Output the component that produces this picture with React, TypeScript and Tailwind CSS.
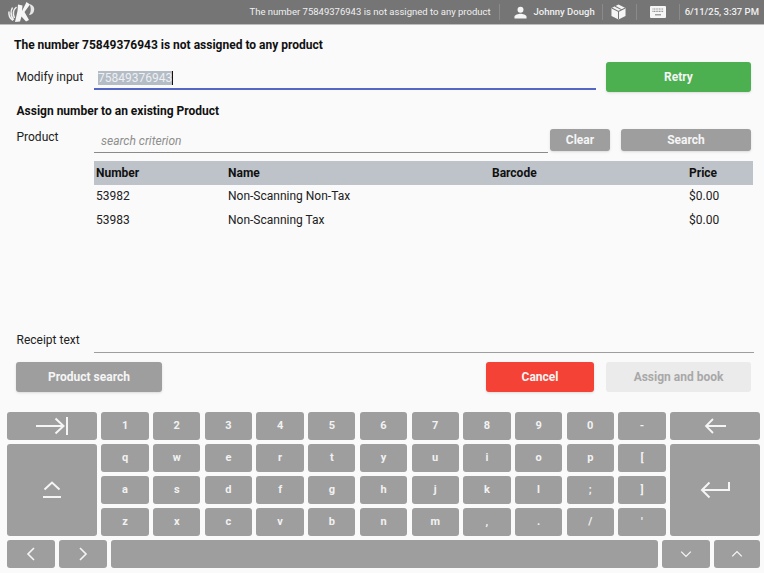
import React from "react";

const font = { fontFamily: "Roboto, 'Liberation Sans', sans-serif" };

function Key({ children, className = "" }: { children?: React.ReactNode; className?: string }) {
  return (
    <div className={"flex items-center justify-center rounded-[3px] bg-[#9e9e9e] text-[11px] font-bold text-[#f2f2f2] " + className}>
      {children}
    </div>
  );
}

function Logo() {
  return (
    <svg width="28" height="22" viewBox="0 0 28 22" fill="none">
      <path d="M11 3.500l4.500 1-.5 5.500L19.500 1 23 3.500 17.500 11l4.500 8-3 1.500-4.500-5-1.500 5-5 .5 2.500-11z" fill="#f6f6f6" />
      <path d="M22.500 3c3.500 1 5.500 3.500 4.500 7-.7 2.500-2.700 4-5 4 2-3 2.500-6.500.5-11z" fill="#e6e6e6" />
      <path d="M9.500 6C6.500 8.500 5.500 12.500 7.500 17M5.500 6.500C3.500 10 3.500 14.500 6.500 19M2 10.500c-.5 3.500 1 7 4 9" stroke="#f0f0f0" strokeWidth="1.500" />
    </svg>
  );
}

function UserIcon() {
  return (
    <svg width="13" height="13" viewBox="0 0 14 14" fill="#f5f5f5">
      <circle cx="7" cy="4" r="3.200" />
      <path d="M0.500 13.500v-1.800c0-2.200 4.300-3.300 6.500-3.300s6.500 1.100 6.500 3.300v1.800z" />
    </svg>
  );
}

function BoxIcon() {
  return (
    <svg width="15" height="16" viewBox="0 0 16 17">
      <path d="M8 .5l7.500 3.600v8.600L8 16.500.5 12.700V4.100z" fill="#f5f5f5" />
      <path d="M.8 4.300L8 8l7.200-3.700M8 8v8.300M4.300 2.400l7.300 3.800" stroke="#757575" strokeWidth="1.100" fill="none" />
    </svg>
  );
}

function KeyboardIcon() {
  return (
    <svg width="16" height="12" viewBox="0 0 16 12">
      <rect width="16" height="12" rx="1" fill="#f5f5f5" />
      <path d="M2.500 3h11M2.500 5.300h11" stroke="#8a8a8a" strokeWidth="1.200" strokeDasharray="1 .6" />
      <path d="M5 8.800h6" stroke="#8a8a8a" strokeWidth="1.200" />
    </svg>
  );
}

function Sep() {
  return <div className="h-4 w-px bg-[#8a8a8a]" />;
}

function Line({ d, w, h, vb, sw = 1.6 }: { d: string; w: number; h: number; vb: string; sw?: number }) {
  return (
    <svg width={w} height={h} viewBox={vb} fill="none" stroke="#f5f5f5" strokeWidth={sw}>
      <path d={d} />
    </svg>
  );
}

const row1 = ["1", "2", "3", "4", "5", "6", "7", "8", "9", "0", "-"];
const row2 = ["q", "w", "e", "r", "t", "y", "u", "i", "o", "p", "["];
const row3 = ["a", "s", "d", "f", "g", "h", "j", "k", "l", ";", "]"];
const row4 = ["z", "x", "c", "v", "b", "n", "m", ",", ".", "/", "'"];

const products = [
  ["53982", "Non-Scanning Non-Tax", "", "$0.00"],
  ["53983", "Non-Scanning Tax", "", "$0.00"],
];

export default function App() {
  return (
    <div className="flex h-[573px] w-[764px] flex-col overflow-hidden bg-[#fafafa] text-[#212121]" style={font}>
      <header className="flex h-[25px] shrink-0 items-center border-b border-[#bdbdbd] bg-[#757575] pr-[5px] pl-[7px] text-[9.500px] text-[#f0f0f0]">
        <Logo />
        <span className="ml-auto">The number 75849376943 is not assigned to any product</span>
        <div className="ml-2"><Sep /></div>
        <div className="ml-[14px] flex items-center gap-[7px] font-medium">
          <UserIcon />
          <span>Johnny Dough</span>
        </div>
        <div className="ml-[7px]"><Sep /></div>
        <div className="ml-[8px]"><BoxIcon /></div>
        <div className="ml-[10px]"><Sep /></div>
        <div className="ml-[13px]"><KeyboardIcon /></div>
        <div className="ml-[13px]"><Sep /></div>
        <span className="ml-[5px] font-medium">6/11/25, 3:37 PM</span>
      </header>

      <main className="flex h-[387px] shrink-0 flex-col pl-[14px] text-[12px]">
        <h1 className="mt-[14px] h-[13px] text-[12px] leading-[13px] font-bold text-[#111]">
          The number 75849376943 is not assigned to any product
        </h1>

        <div className="mt-[10px] flex items-start pl-[2.500px]">
          <label className="mt-[9px] w-[77.500px] leading-[13px]">Modify input</label>
          <div className="flex h-[28px] w-[502px] items-start border-b-2 border-[#5567c4] pt-[9px] pl-[4px]">
            <span className="border-r border-[#111] bg-[#b4bcc6] text-[12px] leading-[14px] text-[#eef0f2]">75849376943</span>
          </div>
          <button className="ml-[10px] h-[30px] w-[145px] rounded-[3px] bg-[#4caf50] font-bold text-[#f5f5f5] shadow-sm">Retry</button>
        </div>

        <h2 className="mt-[13px] ml-[2.500px] h-[13px] leading-[13px] font-bold text-[#111]">Assign number to an existing Product</h2>

        <div className="mt-[5px] flex items-start pl-[2.500px]">
          <label className="mt-[8px] w-[77.500px] leading-[13px]">Product</label>
          <div className="flex h-[30px] w-[454px] items-center border-b border-[#8a8a8a] pt-[7px] pl-[7px] text-[#8e8e8e] italic">search criterion</div>
          <button className="mt-[6px] ml-[2px] h-[22px] w-[60px] rounded-[3px] bg-[#9e9e9e] font-bold text-[#f5f5f5] shadow-sm">Clear</button>
          <button className="mt-[6px] ml-[11px] h-[22px] w-[130px] rounded-[3px] bg-[#9e9e9e] font-bold text-[#f5f5f5] shadow-sm">Search</button>
        </div>

        <table className="mt-[8px] ml-[80px] w-[659px] table-fixed border-collapse">
          <thead>
            <tr className="h-[24px] bg-[#bdc3c9] text-left text-[#111]">
              <th className="w-[132px] pl-[2px] font-bold">Number</th>
              <th className="w-[264px] pl-[2px] font-bold">Name</th>
              <th className="w-[197px] pl-[2px] font-bold">Barcode</th>
              <th className="pl-[2px] font-bold">Price</th>
            </tr>
          </thead>
          <tbody>
            {products.map((p) => (
              <tr key={p[0]} className="h-[24px]">
                <td className="pb-[2px] pl-[2px]">{p[0]}</td>
                <td className="pb-[2px] pl-[2px]">{p[1]}</td>
                <td className="pb-[2px] pl-[2px]">{p[2]}</td>
                <td className="pb-[2px] pl-[2px]">{p[3]}</td>
              </tr>
            ))}
          </tbody>
        </table>

        <div className="mt-auto flex items-end pl-[2.500px]">
          <label className="mb-[6px] w-[77.500px] leading-[13px]">Receipt text</label>
          <div className="h-[22px] w-[660px] border-b border-[#9e9e9e]" />
        </div>

        <div className="mt-[9px] mb-[20px] flex pl-[2px]">
          <button className="h-[30px] w-[146px] rounded-[3px] bg-[#9e9e9e] font-bold text-[#f5f5f5] shadow-sm">Product search</button>
          <button className="ml-[324px] h-[30px] w-[108px] rounded-[3px] bg-[#f44336] font-bold text-[#f5f5f5] shadow-sm">Cancel</button>
          <button className="ml-[12px] h-[30px] w-[145px] rounded-[3px] bg-[#ebebeb] font-bold text-[#a8a8a8]">Assign and book</button>
        </div>
      </main>

      <section className="flex flex-col gap-[4px] pl-[7px]">
        <div className="grid grid-cols-[90px_repeat(11,47.300px)_90px] grid-rows-[28px_28px_28px_28px] gap-x-[4.400px] gap-y-[4px]">
          <Key>
            <Line w={32} h={18} vb="0 0 32 18" sw={2} d="M0 9h27M19.500 1.500L27.500 9l-8 7.500M31 0v18" />
          </Key>
          {row1.map((k) => <Key key={k}>{k}</Key>)}
          <Key>
            <Line w={22} h={16} vb="0 0 22 16" sw={1.8} d="M22 8H2M9 1L2 8l7 7" />
          </Key>

          <Key className="row-span-3">
            <svg width="18" height="20" viewBox="0 0 18 20" fill="none" stroke="#f5f5f5" strokeWidth="2">
              <path d="M1.500 9.500L9 2.500l7.500 7M0 17h18" />
            </svg>
          </Key>
          {row2.map((k) => <Key key={k}>{k}</Key>)}
          <Key className="row-span-3">
            <svg width="30" height="18" viewBox="0 0 30 18" fill="none" stroke="#f5f5f5" strokeWidth="2">
              <path d="M29 1v8H2.500M9.500 1.500L2 9l7.500 7.500" />
            </svg>
          </Key>
          {row3.map((k) => <Key key={k}>{k}</Key>)}
          {row4.map((k) => <Key key={k}>{k}</Key>)}
        </div>

        <div className="flex h-[28px] w-[753px] gap-[4px]">
          <Key className="w-[48px]">
            <Line w={10} h={14} vb="0 0 10 14" d="M8 1L2 7l6 6" />
          </Key>
          <Key className="w-[48px]">
            <Line w={10} h={14} vb="0 0 10 14" d="M2 1l6 6-6 6" />
          </Key>
          <Key className="flex-1" />
          <Key className="w-[47.500px]">
            <Line w={12} h={8} vb="0 0 14 10" d="M1 2l6 6 6-6" />
          </Key>
          <Key className="w-[46.500px]">
            <Line w={12} h={8} vb="0 0 14 10" d="M1 8l6-6 6 6" />
          </Key>
        </div>
      </section>
    </div>
  );
}
